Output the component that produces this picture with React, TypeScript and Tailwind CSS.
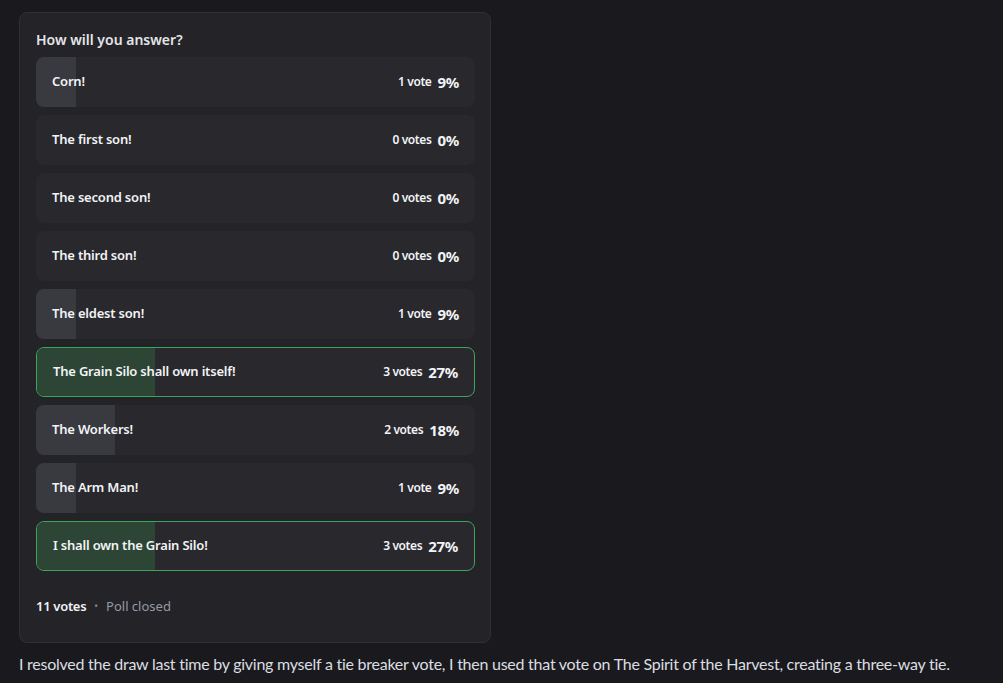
const options = [
  { label: 'Corn!', votes: 1, pct: 9 },
  { label: 'The first son!', votes: 0, pct: 0 },
  { label: 'The second son!', votes: 0, pct: 0 },
  { label: 'The third son!', votes: 0, pct: 0 },
  { label: 'The eldest son!', votes: 1, pct: 9 },
  { label: 'The Grain Silo shall own itself!', votes: 3, pct: 27, win: true },
  { label: 'The Workers!', votes: 2, pct: 18 },
  { label: 'The Arm Man!', votes: 1, pct: 9 },
  { label: 'I shall own the Grain Silo!', votes: 3, pct: 27, win: true },
]

export default function App() {
  return (
    <div
      className="h-[683px] w-[1003px] overflow-hidden bg-[#1a1a1e] text-[#dbdee1]"
      style={{ fontFamily: '"Noto Sans", "Open Sans", sans-serif' }}
    >
      <div className="pl-[19px] pt-[12px]">
        <div className="w-[472px] rounded-lg border border-[#2f2f35] bg-[#232328] pb-[26px] pl-4 pr-[15px] pt-[17px]">
          <div className="mb-[7px] text-[14px] font-semibold leading-5 text-[#e3e5e8]">How will you answer?</div>
          <div className="flex flex-col gap-2">
            {options.map((o) => (
              <div
                key={o.label}
                className={
                  'relative h-[50px] overflow-hidden rounded-lg ' +
                  (o.win ? 'border border-[#3ba55d] bg-[#28282d]' : 'bg-[#28282d]')
                }
              >
                <div
                  className={'absolute inset-y-0 left-0 ' + (o.win ? 'bg-[#2c4535]' : 'bg-[#393940]')}
                  style={{ width: `${o.pct}%` }}
                />
                <div className="relative flex h-full items-center justify-between pl-4 pr-[16px]">
                  <span className="text-[13px] font-semibold tracking-[-0.2px] text-[#f2f3f5]">{o.label}</span>
                  <span className="flex items-center gap-[6px] text-[#f2f3f5]">
                    <span className="text-[12px] font-semibold tracking-[-0.4px]">
                      {o.votes} {o.votes === 1 ? 'vote' : 'votes'}
                    </span>
                    <span className="text-[15px] font-bold tracking-[-0.3px]">{o.pct}%</span>
                  </span>
                </div>
              </div>
            ))}
          </div>
          <div className="mt-[25px] flex items-center text-[13px] leading-5">
            <span className="font-semibold tracking-[-0.3px] text-[#f2f3f5]">11 votes</span>
            <span className="mx-2 text-[10px] text-[#80848e]">•</span>
            <span className="text-[#949ba4]">Poll closed</span>
          </div>
        </div>
        <div
          className="mt-[10px] whitespace-nowrap text-[16px] leading-[22px] tracking-[-0.25px] text-[#dbdee1]"
          style={{ fontFamily: 'Lato, "Noto Sans", sans-serif' }}
        >
          I resolved the draw last time by giving myself a tie breaker vote, I then used that vote on The Spirit of the Harvest, creating a three-way tie.
        </div>
      </div>
    </div>
  )
}
